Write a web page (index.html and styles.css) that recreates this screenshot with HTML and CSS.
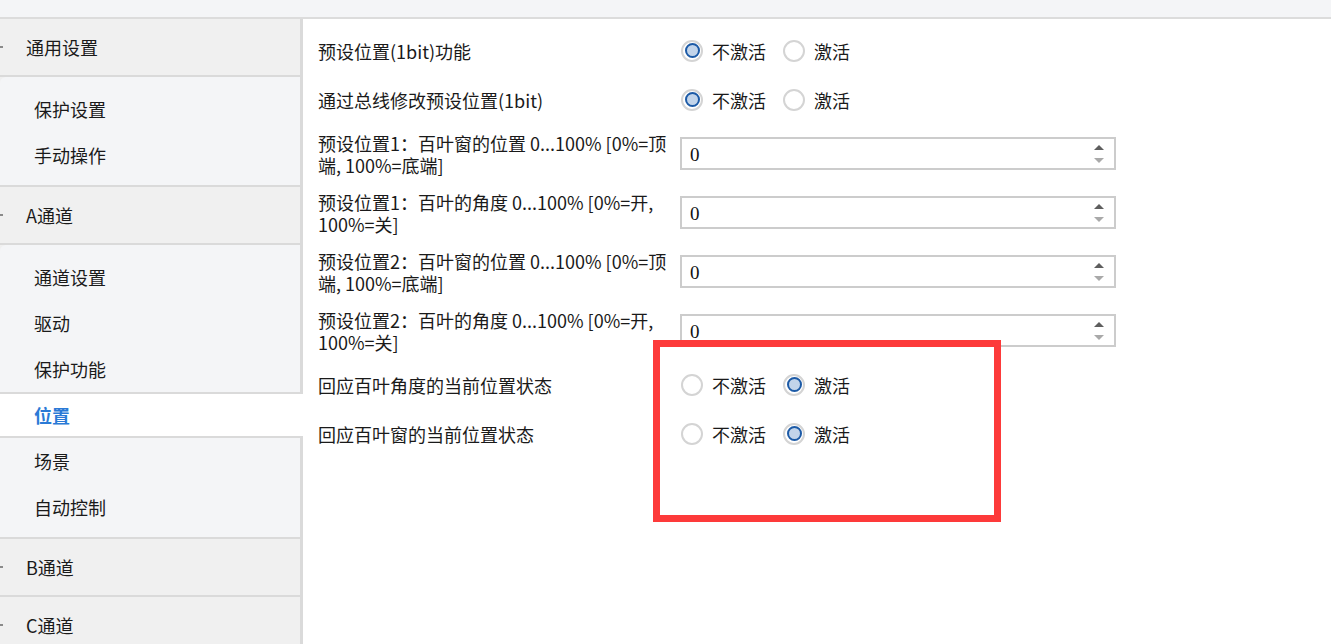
FILE: index.html
```html
<!DOCTYPE html>
<html>
<head>
    <title>参数设置</title>
    <link rel="stylesheet" href="styles.css">
</head>
<body>
    <div class="topbar"></div>
    <div class="main">
        <div class="sidebar">
            <div class="group-head"><span class="dash"></span>通用设置</div>
            <div class="sub">
                <div class="item">保护设置</div>
                <div class="item">手动操作</div>
            </div>
            <div class="group-head"><span class="dash"></span>A通道</div>
            <div class="sub">
                <div class="item">通道设置</div>
                <div class="item">驱动</div>
                <div class="item">保护功能</div>
                <div class="item active">位置</div>
                <div class="item">场景</div>
                <div class="item">自动控制</div>
            </div>
            <div class="group-head"><span class="dash"></span>B通道</div>
            <div class="group-head"><span class="dash"></span>C通道</div>
        </div>

        <div class="content">
            <div class="row">
                <div class="label">预设位置(1bit)功能</div>
                <div class="radios">
                    <label class="radio"><span class="dot checked"></span>不激活</label>
                    <label class="radio"><span class="dot"></span>激活</label>
                </div>
            </div>
            <div class="row">
                <div class="label">通过总线修改预设位置(1bit)</div>
                <div class="radios">
                    <label class="radio"><span class="dot checked"></span>不激活</label>
                    <label class="radio"><span class="dot"></span>激活</label>
                </div>
            </div>
            <div class="row tall">
                <div class="label">预设位置1：百叶窗的位置 0...100% [0%=顶端, 100%=底端]</div>
                <div class="num"><input type="text" value="0"><span class="spin"><i class="up"></i><i class="down"></i></span></div>
            </div>
            <div class="row tall">
                <div class="label">预设位置1：百叶的角度 0...100% [0%=开, 100%=关]</div>
                <div class="num"><input type="text" value="0"><span class="spin"><i class="up"></i><i class="down"></i></span></div>
            </div>
            <div class="row tall">
                <div class="label">预设位置2：百叶窗的位置 0...100% [0%=顶端, 100%=底端]</div>
                <div class="num"><input type="text" value="0"><span class="spin"><i class="up"></i><i class="down"></i></span></div>
            </div>
            <div class="row tall">
                <div class="label">预设位置2：百叶的角度 0...100% [0%=开, 100%=关]</div>
                <div class="num"><input type="text" value="0"><span class="spin"><i class="up"></i><i class="down"></i></span></div>
            </div>
            <div class="row">
                <div class="label">回应百叶角度的当前位置状态</div>
                <div class="radios">
                    <label class="radio"><span class="dot"></span>不激活</label>
                    <label class="radio"><span class="dot checked"></span>激活</label>
                </div>
            </div>
            <div class="row">
                <div class="label">回应百叶窗的当前位置状态</div>
                <div class="radios">
                    <label class="radio"><span class="dot"></span>不激活</label>
                    <label class="radio"><span class="dot checked"></span>激活</label>
                </div>
            </div>
        </div>
    </div>
    <div class="mark"></div>
</body>
</html>
```
FILE: styles.css
```css
body {
    margin: 0;
    font-family: "Noto Sans CJK SC", "Noto Sans", sans-serif;
    font-size: 18px;
    color: #1a1a1a;
    background-color: white;
    height: 644px;
    overflow: hidden;
}
.topbar {
    height: 17px;
    background-color: #f4f5f7;
    border-bottom: 2px solid #dcdcdc;
}
.main {
    display: flex;
    height: 625px;
}
.sidebar {
    width: 300px;
    flex-shrink: 0;
    border-right: 3px solid #dadada;
    background-color: #f0f0f0;
}
.group-head {
    display: flex;
    align-items: center;
    background-color: #f0f0f0;
    border-bottom: 2px solid #dadada;
    box-sizing: border-box;
    height: 58px;
    padding-bottom: 1px;
}
.dash {
    width: 3px;
    height: 2px;
    background-color: #8a8a8a;
    margin-right: 23px;
}
.sub {
    background-color: #f4f5f7;
    padding: 9px 0 7px;
    border-bottom: 2px solid #dadada;
    border-top-left-radius: 6px;
}
.item {
    height: 46px;
    line-height: 46px;
    padding-left: 34px;
}
.item.active {
    background-color: white;
    color: #2a7ad6;
    font-weight: bold;
    border-top: 2px solid #dadada;
    border-bottom: 2px solid #dadada;
    box-sizing: border-box;
    line-height: 42px;
    margin-right: -3px;
}
.content {
    flex: 1;
    padding: 7px 0 0 15px;
}
.row {
    display: flex;
    align-items: center;
    height: 49px;
}
.row.tall {
    height: 59px;
}
.label {
    width: 362px;
    flex-shrink: 0;
    line-height: 22px;
}
.radios {
    display: flex;
    align-items: center;
    padding-left: 1px;
}
.radio {
    display: flex;
    align-items: center;
    margin-right: 17px;
}
.dot {
    width: 22px;
    height: 22px;
    border: 2px solid #d4d4d4;
    border-radius: 50%;
    box-sizing: border-box;
    background-color: white;
    margin-right: 9px;
    display: flex;
    align-items: center;
    justify-content: center;
}
.dot.checked::after {
    content: "";
    width: 15px;
    height: 15px;
    border: 2px solid #1c5aa6;
    border-radius: 50%;
    box-sizing: border-box;
    background-color: #c2d4ea;
}
.num {
    width: 436px;
    height: 33px;
    border: 2px solid #cccccc;
    box-sizing: border-box;
    display: flex;
    align-items: center;
    background-color: white;
}
.num input {
    flex: 1;
    min-width: 0;
    border: none;
    outline: none;
    padding: 3px 0 0 8px;
    font-family: "Liberation Serif", serif;
    font-size: 19px;
    color: #111;
    background: transparent;
}
.spin {
    display: flex;
    flex-direction: column;
    align-items: center;
    gap: 8px;
    margin-right: 10px;
}
.spin i {
    width: 0;
    height: 0;
    border-left: 5px solid transparent;
    border-right: 5px solid transparent;
}
.spin .up {
    border-bottom: 5px solid #5e5e5e;
}
.spin .down {
    border-top: 5px solid #a9a9a9;
}
.mark {
    position: absolute;
    left: 653px;
    top: 340px;
    width: 348px;
    height: 182px;
    border: 7px solid #fd3a3a;
    box-sizing: border-box;
}
```
